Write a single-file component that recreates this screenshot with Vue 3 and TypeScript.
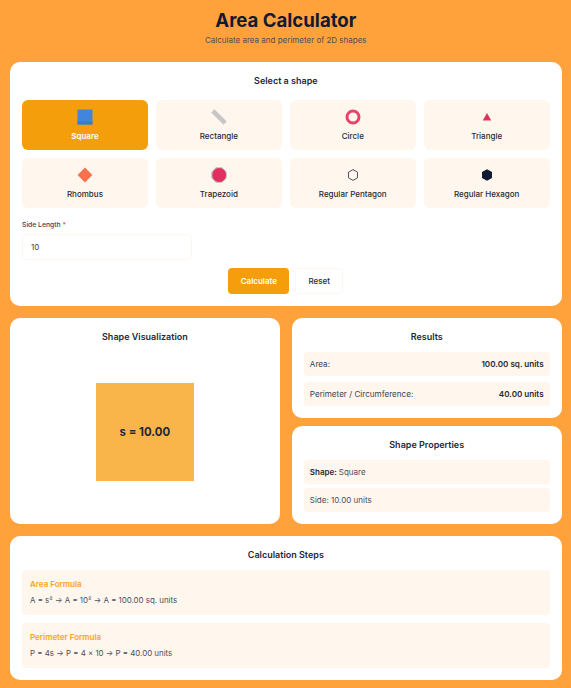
<script setup lang="ts">
interface Shape { name: string; icon: string }
const shapes: Shape[] = [
  { name: 'Square', icon: 'square' },
  { name: 'Rectangle', icon: 'ruler' },
  { name: 'Circle', icon: 'ring' },
  { name: 'Triangle', icon: 'tri' },
  { name: 'Rhombus', icon: 'diamond' },
  { name: 'Trapezoid', icon: 'stop' },
  { name: 'Regular Pentagon', icon: 'hexo' },
  { name: 'Regular Hexagon', icon: 'hexf' },
]
</script>

<template>
  <div class="page">
    <header class="head">
      <h1>Area Calculator</h1>
      <p>Calculate area and perimeter of 2D shapes</p>
    </header>

    <section class="card select">
      <h2>Select a shape</h2>
      <div class="grid">
        <button v-for="(s, i) in shapes" :key="s.name" class="shape" :class="{ active: i === 0 }">
          <svg class="ico" viewBox="0 0 16 16">
            <template v-if="s.icon === 'square'">
              <rect x="0.5" y="0.5" width="15" height="15" rx="1" fill="#4285dc" />
              <rect x="0.5" y="12.5" width="15" height="3" fill="#3f78c4" />
            </template>
            <template v-else-if="s.icon === 'ruler'">
              <path d="M3.4 0.2 15.8 12.4 12.6 15.8 0.2 3.4Z" fill="#c6c6c8" />
            </template>
            <template v-else-if="s.icon === 'ring'">
              <circle cx="8" cy="8" r="6" fill="none" stroke="#e8436a" stroke-width="3" />
            </template>
            <template v-else-if="s.icon === 'tri'">
              <path d="M8 4 12.2 11.5H3.8Z" fill="#e0305f" />
            </template>
            <template v-else-if="s.icon === 'diamond'">
              <path d="M8 0.6 15.4 8 8 15.4 0.6 8Z" fill="#f7714f" />
            </template>
            <template v-else-if="s.icon === 'stop'">
              <path d="M5 0.3H11L15.7 5V11L11 15.7H5L0.3 11V5Z" fill="#bdb5b8" />
              <circle cx="8.2" cy="8" r="6.9" fill="#e0305f" />
            </template>
            <template v-else-if="s.icon === 'hexo'">
              <path d="M8 2.6 12.5 5.2V10.8L8 13.4 3.5 10.8V5.2Z" fill="none" stroke="#3a4050" stroke-width="0.9" />
            </template>
            <template v-else>
              <path d="M8 2.2 13 5V11L8 13.8 3 11V5Z" fill="#111a33" />
            </template>
          </svg>
          <span>{{ s.name }}</span>
        </button>
      </div>
      <label class="lbl" for="side">Side Length <em>*</em></label>
      <input id="side" class="inp" value="10" />
      <div class="actions">
        <button class="btn primary">Calculate</button>
        <button class="btn ghost">Reset</button>
      </div>
    </section>

    <div class="columns">
      <section class="card viz">
        <h2>Shape Visualization</h2>
        <div class="stage">
          <div class="sq">s = 10.00</div>
        </div>
      </section>
      <div class="stack">
        <section class="card results">
          <h2>Results</h2>
          <div class="row"><span>Area:</span><b>100.00 sq. units</b></div>
          <div class="row"><span>Perimeter / Circumference:</span><b>40.00 units</b></div>
        </section>
        <section class="card props">
          <h2>Shape Properties</h2>
          <div class="prop"><b>Shape:</b> Square</div>
          <div class="prop">Side: 10.00 units</div>
        </section>
      </div>
    </div>

    <section class="card steps">
      <h2>Calculation Steps</h2>
      <div class="step">
        <h3>Area Formula</h3>
        <p>A = s² → A = 10² → A = 100.00 sq. units</p>
      </div>
      <div class="step">
        <h3>Perimeter Formula</h3>
        <p>P = 4s → P = 4 × 10 → P = 40.00 units</p>
      </div>
    </section>
  </div>
</template>

<style>
html, body { margin: 0; background: #ffa23b; }
</style>

<style scoped>
* { box-sizing: border-box; }
.page {
  width: 571px;
  height: 688px;
  overflow: hidden;
  padding: 8px 9.4px 8px 10px;
  background: #ffa23b;
  font-family: Inter, "Liberation Sans", sans-serif;
  color: #1a2238;
}
.head { text-align: center; height: 54px; }
h1 { margin: 0; font-size: 18.6px; line-height: 24px; font-weight: 700; color: #111a33; }
.head p { margin: 3px 0 0; font-size: 8px; line-height: 10px; color: #4d4f52; }
.card { background: #fff; border-radius: 10px; padding: 12px; }
h2 { margin: 0; text-align: center; font-size: 9px; line-height: 14px; font-weight: 600; color: #1f2937; }
.select { height: 244px; }
.grid { display: grid; grid-template-columns: repeat(4, 1fr); gap: 8px; margin-top: 12px; }
.shape {
  height: 50px;
  border: 0;
  border-radius: 6px;
  background: #fff6ed;
  padding: 8px 0 0;
  display: flex;
  flex-direction: column;
  align-items: center;
  font-family: inherit;
  font-size: 8px;
  line-height: 10px;
  font-weight: 500;
  color: #1f2937;
}
.shape.active { background: #f59e0b; color: #fff; font-weight: 600; }
.ico { width: 16px; height: 16px; margin: 0.5px 0 6.5px; display: block; }
.lbl { display: block; margin-top: 12px; font-size: 6.8px; line-height: 10px; font-weight: 500; color: #3c4252; }
.lbl em { font-style: normal; color: #ef4444; }
.inp {
  display: block;
  width: 170px;
  height: 26px;
  margin-top: 4px;
  padding: 0 8px;
  border: 1px solid #fff6ed;
  border-radius: 5px;
  background: #fff;
  font-family: inherit;
  font-size: 8px;
  color: #3c4252;
  outline: 0;
}
.actions { display: flex; justify-content: center; gap: 6px; margin-top: 8px; }
.btn { height: 26px; border-radius: 4px; font-family: inherit; font-size: 8px; padding: 0; }
.primary { width: 61px; border: 0; background: #f59e0b; color: #fff; font-weight: 600; }
.ghost { width: 48px; border: 1px solid #fff6ed; background: #fff; color: #1f2937; font-weight: 500; }
.columns { display: grid; grid-template-columns: 1fr 1fr; gap: 12px; margin-top: 12px; }
.viz { height: 206px; }
.stage { display: flex; justify-content: center; margin-top: 39px; }
.sq {
  width: 98px;
  height: 98px;
  background: #f9b54a;
  display: flex;
  align-items: center;
  justify-content: center;
  font-size: 11.4px;
  font-weight: 700;
  color: #1f2937;
}
.stack { display: flex; flex-direction: column; gap: 8px; }
.results { height: 100px; }
.row {
  height: 24px;
  margin-top: 6px;
  padding: 0 6px;
  border-radius: 4px;
  background: #fff6ed;
  display: flex;
  justify-content: space-between;
  align-items: center;
  font-size: 8.1px;
  color: #3c4252;
}
.results h2 + .row { margin-top: 8px; }
.row b { font-weight: 600; color: #1f2937; }
.props { height: 98px; }
.prop {
  height: 24px;
  margin-top: 4px;
  padding: 0 6px;
  border-radius: 4px;
  background: #fff6ed;
  display: flex;
  align-items: center;
  gap: 0.25em;
  font-size: 8px;
  color: #4a4f5e;
}
.props h2 + .prop { margin-top: 8px; }
.prop b { font-weight: 600; color: #1f2937; }
.steps { height: 144px; margin-top: 12px; }
.step { height: 45px; margin-top: 8px; padding: 9px 8px 0; border-radius: 4px; background: #fff6ed; }
.steps h2 + .step { margin-top: 8px; }
h3 { margin: 0; font-size: 8px; line-height: 11px; font-weight: 600; color: #ffa21f; }
.step p { margin: 5px 0 0; font-size: 7.9px; line-height: 10px; color: #4a4f5e; }
</style>
